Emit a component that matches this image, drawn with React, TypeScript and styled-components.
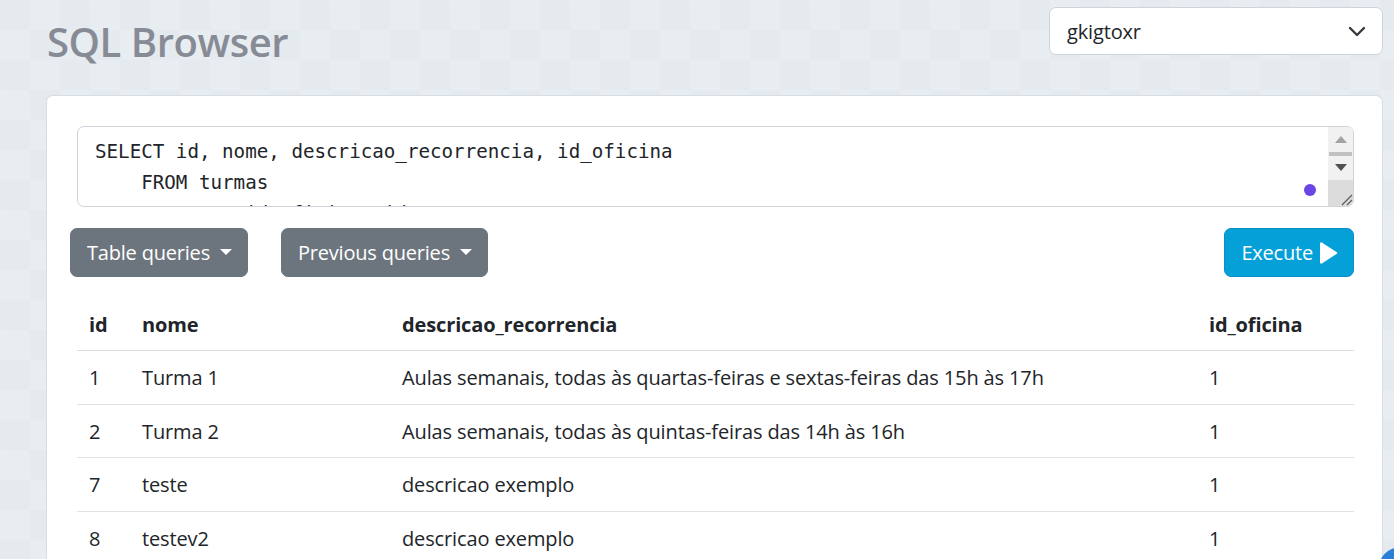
import React from "react";
import styled, { createGlobalStyle } from "styled-components";

const Global = createGlobalStyle`
  html, body { margin: 0; padding: 0; }
  body {
    font-family: "Open Sans", "Noto Sans", sans-serif;
    color: #212529;
    background-color: #e4eaee;
    background-image:
      linear-gradient(45deg, rgba(255,255,255,0.16) 25%, transparent 25%, transparent 75%, rgba(255,255,255,0.16) 75%),
      linear-gradient(45deg, rgba(255,255,255,0.16) 25%, transparent 25%, transparent 75%, rgba(255,255,255,0.16) 75%);
    background-size: 60px 60px, 60px 60px;
    background-position: 0 0, 30px 30px;
    overflow: hidden;
  }
`;

const Page = styled.div`
  height: 559px;
  padding: 0 11px 0 46px;
  box-sizing: border-box;
  overflow: hidden;
`;

const Header = styled.header`
  display: flex;
  justify-content: space-between;
  align-items: flex-start;
  height: 95px;
`;

const Title = styled.h1`
  margin: 15px 0 0 1px;
  font-size: 40px;
  font-weight: 600;
  line-height: 54px;
  color: #878b95;
  letter-spacing: -0.45px;
`;

const Select = styled.div`
  margin-top: 7px;
  width: 334px;
  height: 48px;
  box-sizing: border-box;
  border: 1px solid #ced4da;
  border-radius: 7px;
  background: #fff;
  display: flex;
  align-items: center;
  justify-content: space-between;
  padding: 0 16px 0 17px;
  font-size: 20px;
  letter-spacing: -0.15px;
  color: #212529;
`;

const Card = styled.main`
  background: #fff;
  border: 1px solid #d6dde3;
  border-bottom: none;
  border-radius: 7px 7px 0 0;
  padding: 30px 28px 0 30px;
  height: 600px;
`;

const Editor = styled.div`
  position: relative;
  display: flex;
  height: 81px;
  box-sizing: border-box;
  border: 1px solid #ced4da;
  border-radius: 7px;
  overflow: hidden;
`;

const Code = styled.pre`
  flex: 1;
  margin: 0;
  padding: 9px 17px 0;
  font-family: "DejaVu Sans Mono", "Liberation Mono", monospace;
  font-size: 19.2px;
  line-height: 31px;
  color: #212529;
  overflow: hidden;
`;

const Dot = styled.span`
  position: absolute;
  right: 37px;
  bottom: 10px;
  width: 12px;
  height: 12px;
  border-radius: 50%;
  background: #6b45e6;
`;

const ScrollBar = styled.div`
  width: 25px;
  display: flex;
  flex-direction: column;
  background: #f1f1f1;
`;

const ScrollBtn = styled.div<{ $h: number }>`
  height: ${(p) => p.$h}px;
  display: flex;
  align-items: center;
  justify-content: center;
`;

const Thumb = styled.div`
  height: 4px;
  margin: 1px 1px;
  background: #c1c1c1;
`;

const Corner = styled.div`
  margin-top: auto;
  height: 26px;
  background: #dcdcdc;
  display: flex;
  align-items: flex-end;
  justify-content: flex-end;
`;

const Toolbar = styled.div`
  display: flex;
  align-items: center;
  gap: 33px;
  margin: 21px 0 0 -7px;
`;

const Button = styled.button<{ $variant?: "secondary" | "info" }>`
  height: 49px;
  box-sizing: border-box;
  border-radius: 7px;
  border: 1px solid ${(p) => (p.$variant === "info" ? "#0a8fc4" : "#6c757d")};
  background: ${(p) => (p.$variant === "info" ? "#06a0d9" : "#6c757d")};
  color: #fff;
  font-family: inherit;
  font-size: 20px;
  letter-spacing: -0.2px;
  padding: 0 15px 0 16px;
  display: flex;
  align-items: center;
  gap: 5px;
  cursor: pointer;
`;

const Caret = styled.span`
  margin-left: 5px;
  width: 0;
  height: 0;
  border-top: 6px solid #fff;
  border-left: 6px solid transparent;
  border-right: 6px solid transparent;
  position: relative;
  top: -1px;
`;

const Spacer = styled.div`
  flex: 1;
`;

const Table = styled.table`
  width: 100%;
  margin-top: 21px;
  border-collapse: collapse;
  table-layout: fixed;
  font-size: 20px;
  letter-spacing: -0.13px;
`;

const Th = styled.th`
  text-align: left;
  font-weight: 700;
  padding: 12px 12px 11px;
  line-height: 29px;
  border-bottom: 1px solid #dcdde3;
  white-space: nowrap;
`;

const Td = styled.td`
  padding: 13px 12px 11px;
  line-height: 28.7px;
  border-bottom: 1px solid #dee2e6;
  white-space: nowrap;
`;

const Fab = styled.span`
  position: fixed;
  right: -30px;
  bottom: -34px;
  width: 46px;
  height: 46px;
  border-radius: 50%;
  background: #2b7fd6;
`;

const rows = [
  { id: 1, nome: "Turma 1", desc: "Aulas semanais, todas às quartas-feiras e sextas-feiras das 15h às 17h", of: 1 },
  { id: 2, nome: "Turma 2", desc: "Aulas semanais, todas às quintas-feiras das 14h às 16h", of: 1 },
  { id: 7, nome: "teste", desc: "descricao exemplo", of: 1 },
  { id: 8, nome: "testev2", desc: "descricao exemplo", of: 1 },
];

export default function App() {
  return (
    <Page>
      <Global />
      <Header>
        <Title>SQL Browser</Title>
        <Select>
          <span>gkigtoxr</span>
          <svg width="18" height="11" viewBox="0 0 18 11" fill="none">
            <path d="M2 2l7 7 7-7" stroke="#343a40" strokeWidth="2.4" strokeLinecap="round" strokeLinejoin="round" />
          </svg>
        </Select>
      </Header>
      <Card>
        <Editor>
          <Code>{`SELECT id, nome, descricao_recorrencia, id_oficina
    FROM turmas
    ORDER BY id_oficina, id`}</Code>
          <Dot />
          <ScrollBar>
            <ScrollBtn $h={24}>
              <svg width="12" height="7" viewBox="0 0 12 7"><path d="M0 7L6 0l6 7z" fill="#a3a3a3" /></svg>
            </ScrollBtn>
            <Thumb />
            <ScrollBtn $h={20}>
              <svg width="12" height="7" viewBox="0 0 12 7"><path d="M0 0h12L6 7z" fill="#505050" /></svg>
            </ScrollBtn>
            <Corner>
              <svg width="14" height="14" viewBox="0 0 14 14">
                <path d="M13 3L3 13M13 8L8 13" stroke="#5a5a5a" strokeWidth="1.2" />
              </svg>
            </Corner>
          </ScrollBar>
        </Editor>
        <Toolbar>
          <Button $variant="secondary">
            Table queries<Caret />
          </Button>
          <Button $variant="secondary">
            Previous queries<Caret />
          </Button>
          <Spacer />
          <Button $variant="info">
            Execute
            <svg width="20" height="24" viewBox="0 0 20 24">
              <path d="M2 2.5v19a1.2 1.2 0 0 0 1.8 1L18.5 13a1.2 1.2 0 0 0 0-2L3.8 1.5A1.2 1.2 0 0 0 2 2.5z" fill="#fff" />
            </svg>
          </Button>
        </Toolbar>
        <Table>
          <colgroup>
            <col style={{ width: 53 }} />
            <col style={{ width: 260 }} />
            <col style={{ width: 807 }} />
            <col />
          </colgroup>
          <thead>
            <tr>
              <Th>id</Th>
              <Th>nome</Th>
              <Th>descricao_recorrencia</Th>
              <Th>id_oficina</Th>
            </tr>
          </thead>
          <tbody>
            {rows.map((r) => (
              <tr key={r.id}>
                <Td>{r.id}</Td>
                <Td>{r.nome}</Td>
                <Td>{r.desc}</Td>
                <Td>{r.of}</Td>
              </tr>
            ))}
          </tbody>
        </Table>
      </Card>
      <Fab />
    </Page>
  );
}
